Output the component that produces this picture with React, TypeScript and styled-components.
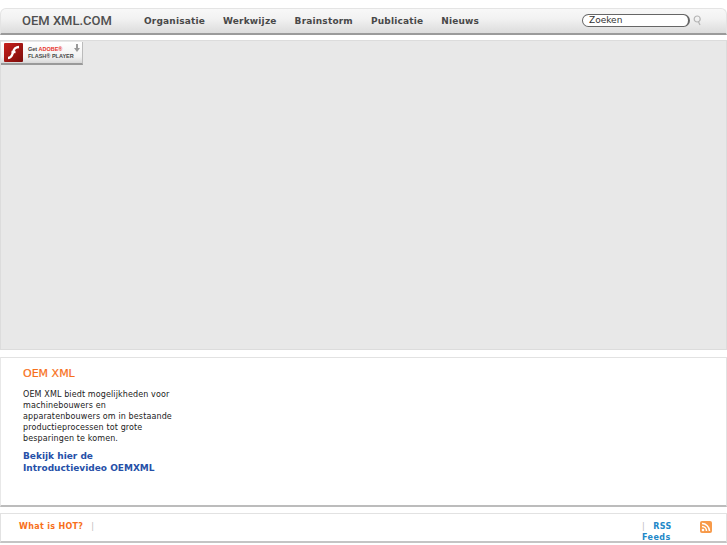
import React from "react";
import styled, { createGlobalStyle } from "styled-components";

const GlobalStyle = createGlobalStyle`
  html, body {
    margin: 0;
    padding: 0;
    background: #fff;
    overflow: hidden;
  }
  body {
    font-family: "DejaVu Sans", Verdana, sans-serif;
  }
`;

const Page = styled.div`
  width: 727px;
  height: 545px;
  padding-top: 8px;
  box-sizing: border-box;
  display: flex;
  flex-direction: column;
`;

const Header = styled.div`
  height: 27px;
  box-sizing: border-box;
  display: flex;
  align-items: center;
  padding-bottom: 1px;
  border: 1px solid #e4e4e4;
  border-bottom: 2px solid #9a9a9a;
  border-radius: 6px 6px 0 0;
  background: linear-gradient(#f8f8f8, #f2f2f2 40%, #dcdcdc);
`;

const Logo = styled.div`
  width: 122px;
  margin-left: 21px;
  font-family: Roboto, "Liberation Sans", sans-serif;
  font-size: 13px;
  font-weight: 500;
  color: #505050;
  white-space: nowrap;
`;

const Nav = styled.nav`
  display: flex;
  gap: 18px;
`;

const NavLink = styled.a`
  font-size: 9px;
  font-weight: 700;
  letter-spacing: 0.18px;
  color: #484848;
`;

const Search = styled.div`
  margin-left: auto;
  margin-right: 24px;
  margin-bottom: 1px;
  display: flex;
  align-items: center;
  gap: 3px;
`;

const SearchField = styled.div`
  width: 108px;
  height: 13px;
  box-sizing: border-box;
  border: 1px solid #666;
  border-right-width: 2px;
  border-radius: 7px;
  background: #fff;
  padding-left: 6px;
  font-size: 9px;
  line-height: 10px;
  color: #333;
`;

const FlashArea = styled.div`
  height: 310px;
  box-sizing: border-box;
  margin-top: 5px;
  background: #e8e8e8;
  border: 1px solid #dcdcdc;
  padding: 1px 0;
`;

const FlashBadge = styled.div`
  width: 82px;
  height: 23px;
  display: flex;
  align-items: center;
  box-sizing: border-box;
  padding-left: 3px;
  background: linear-gradient(#fff, #f2f2f2 70%, #d8d8d8);
  border-bottom: 2px solid #999;
  border-right: 1px solid #bbb;
  position: relative;
`;

const FlashIcon = styled.div`
  width: 19px;
  height: 19px;
  background: linear-gradient(135deg, #c8201c, #7c0c0a);
  border-radius: 1px;
  display: flex;
  align-items: center;
  justify-content: center;
`;

const FlashText = styled.div`
  margin-left: 5px;
  font-family: "Liberation Sans", sans-serif;
  font-size: 5.5px;
  line-height: 7px;
  font-weight: 700;
  color: #444;
  white-space: nowrap;
`;

const Adobe = styled.span`
  color: #e8332a;
`;

const DownloadMark = styled.svg`
  position: absolute;
  top: 2px;
  right: 2px;
`;

const Panel = styled.section`
  height: 150px;
  box-sizing: border-box;
  margin-top: 7px;
  padding: 9px 0 0 22px;
  border: 1px solid #e2e2e2;
  border-bottom: 2px solid #bcbcbc;
  border-left-color: #e8e8e8;
  background: #fff;
`;

const Title = styled.h2`
  margin: 0 0 8px;
  font-size: 11px;
  line-height: 14px;
  font-weight: 400;
  -webkit-text-stroke: 0.2px #f7701a;
  color: #f7701a;
`;

const Intro = styled.p`
  margin: 0 0 6px;
  width: 156px;
  font-size: 8px;
  letter-spacing: 0.12px;
  line-height: 11px;
  color: #222;
`;

const VideoLink = styled.a`
  display: block;
  width: 150px;
  font-size: 9px;
  line-height: 12px;
  font-weight: 700;
  color: #2650a8;
`;

const Footer = styled.footer`
  height: 30px;
  box-sizing: border-box;
  margin-top: 6px;
  padding: 7px 14px 0 18px;
  display: flex;
  border: 1px solid #e2e2e2;
  border-bottom: 2px solid #c4c4c4;
  background: #fff;
  overflow: hidden;
`;

const Hot = styled.span`
  font-size: 8px;
  line-height: 11px;
  font-weight: 700;
  letter-spacing: 0.32px;
  color: #f7701a;
`;

const Sep = styled.span`
  margin-left: 8px;
  font-size: 8px;
  line-height: 11px;
  color: #bbb;
`;

const RssBlock = styled.div`
  margin-left: auto;
  width: 47px;
  font-size: 8px;
  line-height: 11px;
  font-weight: 700;
  letter-spacing: 0.42px;
  color: #2288c8;
`;

const RssSep = styled.span`
  margin-right: 8px;
  font-weight: 400;
  color: #bbb;
`;

const RssIcon = styled.svg`
  margin-left: 11px;
  flex: none;
`;

export default function App() {
  return (
    <Page>
      <GlobalStyle />
      <Header>
        <Logo>OEM XML.COM</Logo>
        <Nav>
          {["Organisatie", "Werkwijze", "Brainstorm", "Publicatie", "Nieuws"].map((item) => (
            <NavLink key={item}>{item}</NavLink>
          ))}
        </Nav>
        <Search>
          <SearchField>Zoeken</SearchField>
          <svg width="9" height="11" viewBox="0 0 9 11" fill="none" stroke="#b4b4b4" strokeWidth="1.2">
            <circle cx="4.2" cy="4" r="3" />
            <path d="M5.5 7l1.5 3" />
          </svg>
        </Search>
      </Header>
      <FlashArea>
        <FlashBadge>
          <FlashIcon>
            <svg width="13" height="15" viewBox="0 0 13 15" fill="none" stroke="#fff" strokeWidth="2.4">
              <path d="M12 2C8 2 7 4 6 7.500S4 13 1 13" />
              <path d="M4.500 7h4" />
            </svg>
          </FlashIcon>
          <FlashText>
            Get <Adobe>ADOBE®</Adobe>
            <br />
            FLASH® PLAYER
          </FlashText>
          <DownloadMark width="6" height="8" viewBox="0 0 6 8" fill="#999">
            <path d="M2 0h2v4h2L3 8 0 4h2z" />
          </DownloadMark>
        </FlashBadge>
      </FlashArea>
      <Panel>
        <Title>OEM XML</Title>
        <Intro>
          OEM XML biedt mogelijkheden voor machinebouwers en apparatenbouwers om in bestaande
          productieprocessen tot grote besparingen te komen.
        </Intro>
        <VideoLink>Bekijk hier de Introductievideo OEMXML</VideoLink>
      </Panel>
      <Footer>
        <Hot>What is HOT?</Hot>
        <Sep>|</Sep>
        <RssBlock>
          <RssSep>|</RssSep>RSS Feeds
        </RssBlock>
        <RssIcon width="12" height="12" viewBox="0 0 12 12">
          <rect width="12" height="12" rx="2" fill="#f79a4a" />
          <circle cx="3" cy="9" r="1.300" fill="#fff" />
          <path d="M2 5.500A4.500 4.500 0 0 1 6.500 10M2 2.500A7.500 7.500 0 0 1 9.500 10" fill="none" stroke="#fff" strokeWidth="1.500" />
        </RssIcon>
      </Footer>
    </Page>
  );
}
